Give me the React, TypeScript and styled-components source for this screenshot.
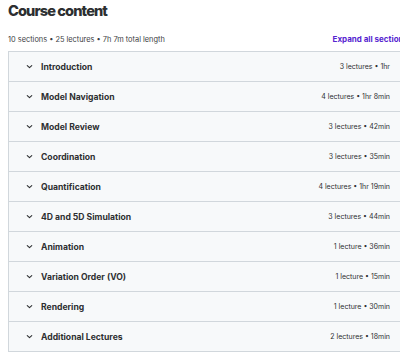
import React from "react";
import styled, { createGlobalStyle } from "styled-components";

type Section = { title: string; lectures: number; length: string };

const sections: Section[] = [
  { title: "Introduction", lectures: 3, length: "1hr" },
  { title: "Model Navigation", lectures: 4, length: "1hr 8min" },
  { title: "Model Review", lectures: 3, length: "42min" },
  { title: "Coordination", lectures: 3, length: "35min" },
  { title: "Quantification", lectures: 4, length: "1hr 19min" },
  { title: "4D and 5D Simulation", lectures: 3, length: "44min" },
  { title: "Animation", lectures: 1, length: "36min" },
  { title: "Variation Order (VO)", lectures: 1, length: "15min" },
  { title: "Rendering", lectures: 1, length: "30min" },
  { title: "Additional Lectures", lectures: 2, length: "18min" },
];

export default function App() {
  return (
    <>
      <GlobalStyle />
      <Wrapper>
        <Title>Course content</Title>
        <MetaRow>
          <span>10 sections • 25 lectures • 7h 7m total length</span>
          <ExpandButton>Expand all sections</ExpandButton>
        </MetaRow>
        <List>
          {sections.map((s) => (
            <Row key={s.title}>
              <Chevron viewBox="0 0 10 10" aria-hidden>
                <path d="M2.5 4 L5 6.3 L7.5 4" />
              </Chevron>
              <RowTitle>{s.title}</RowTitle>
              <RowMeta>
                {s.lectures} {s.lectures === 1 ? "lecture" : "lectures"} •{" "}
                {s.length}
              </RowMeta>
            </Row>
          ))}
        </List>
      </Wrapper>
    </>
  );
}

const GlobalStyle = createGlobalStyle`
  html, body {
    margin: 0;
    padding: 0;
    background: #ffffff;
    overflow: hidden;
  }
  body {
    font-family: Inter, "Noto Sans", sans-serif;
    color: #2d2f31;
  }
`;

const Wrapper = styled.div`
  width: 400px;
  padding: 0 0 0 8px;
`;

const Title = styled.h2`
  margin: 0;
  padding-top: 2px;
  font-size: 14.6px;
  font-weight: 800;
  line-height: 18px;
  letter-spacing: -0.9px;
  color: #2d2f31;
`;

const MetaRow = styled.div`
  display: flex;
  align-items: center;
  justify-content: space-between;
  margin-top: 13px;
  height: 12px;
  font-size: 7.4px;
  color: #3d4043;
  white-space: nowrap;
`;

const ExpandButton = styled.button`
  border: none;
  background: none;
  padding: 0;
  font-family: inherit;
  font-size: 8px;
  font-weight: 700;
  color: #5624d0;
  cursor: pointer;
`;

const List = styled.div`
  margin-top: 6px;
  border: 1px solid #d1d7dc;
  border-bottom: none;
`;

const Row = styled.div`
  display: flex;
  align-items: center;
  height: 29px;
  padding: 0 17px 0 16px;
  background: #f7f9fa;
  border-bottom: 1px solid #d1d7dc;
`;

const Chevron = styled.svg`
  width: 9px;
  height: 9px;
  margin-right: 7px;
  fill: none;
  stroke: #2d2f31;
  stroke-width: 1.2;
  stroke-linecap: round;
  stroke-linejoin: round;
`;

const RowTitle = styled.span`
  flex: 1;
  font-size: 8.6px;
  font-weight: 700;
  color: #2d2f31;
`;

const RowMeta = styled.span`
  font-size: 7px;
  color: #2d2f31;
  white-space: nowrap;
`;
